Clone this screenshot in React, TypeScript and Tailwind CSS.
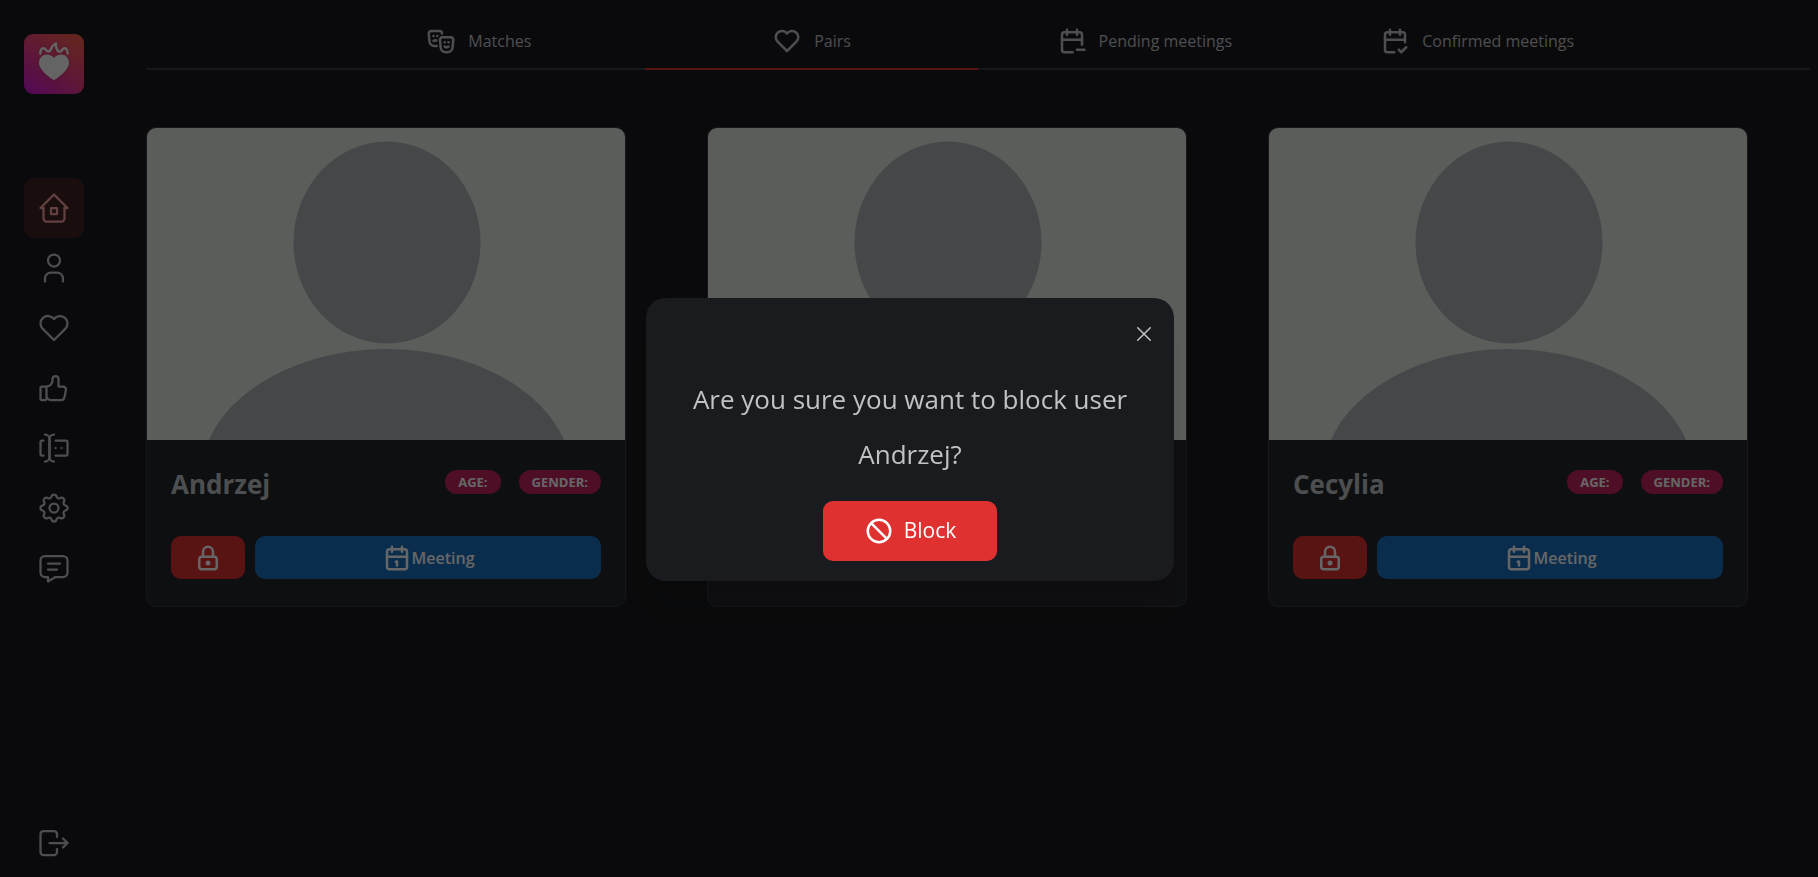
import React from "react";
import {
  TbBan,
  TbCalendar,
  TbCalendarCheck,
  TbCalendarMinus,
  TbForms,
  TbHeart,
  TbHome2,
  TbLock,
  TbLogout,
  TbMasksTheater,
  TbMessage,
  TbSettings,
  TbThumbUp,
  TbUser,
} from "react-icons/tb";
import type { IconType } from "react-icons";

const navItems: { label: string; icon: IconType; active?: boolean }[] = [
  { label: "Home", icon: TbHome2, active: true },
  { label: "Profile", icon: TbUser },
  { label: "Pairs", icon: TbHeart },
  { label: "Likes", icon: TbThumbUp },
  { label: "Forms", icon: TbForms },
  { label: "Settings", icon: TbSettings },
  { label: "Messages", icon: TbMessage },
];

const tabs: { label: string; icon: IconType; active?: boolean }[] = [
  { label: "Matches", icon: TbMasksTheater },
  { label: "Pairs", icon: TbHeart, active: true },
  { label: "Pending meetings", icon: TbCalendarMinus },
  { label: "Confirmed meetings", icon: TbCalendarCheck },
];

const people = ["Andrzej", "Beata", "Cecylia"];

function Logo() {
  return (
    <svg viewBox="0 0 60 60" className="size-[60px]" role="img" aria-label="Logo">
      <defs>
        <linearGradient id="logo-bg" x1="0.15" y1="1" x2="0.85" y2="0">
          <stop offset="0" stopColor="#d01ad0" />
          <stop offset="0.5" stopColor="#ee3f84" />
          <stop offset="1" stopColor="#fa5f4e" />
        </linearGradient>
      </defs>
      <rect width="60" height="60" rx="9" fill="url(#logo-bg)" />
      <g className="drop-shadow-sm">
        <path
          d="M30 46 C28.500 46 15 36.500 15 29 C15 24 18.500 20.500 22.500 20.500 C25.500 20.500 28.500 21.800 30 24 C31.500 21.800 34.500 20.500 37.500 20.500 C41.500 20.500 45 24 45 29 C45 36.500 31.500 46 30 46 Z"
          fill="#fafafa"
        />
        <path
          d="M16.300 19.500 C16.300 14.500 19.500 12.500 22 16 C23.500 18.200 26 17.800 27 15 C28 12 29.500 10.500 32 9.500 C31.500 12 32 14 33.500 16.500 C35 18.500 37 17.800 38.500 15.500 C41 12.500 43.700 15.500 43.700 19.500"
          fill="none"
          stroke="#fafafa"
          strokeWidth="2.400"
          strokeLinecap="round"
          strokeLinejoin="round"
        />
      </g>
    </svg>
  );
}

function Sidebar() {
  return (
    <nav className="flex w-[108px] shrink-0 flex-col items-center pt-[34px] pb-1">
      <Logo />
      <div className="mt-[84px] flex flex-col">
        {navItems.map(({ label, icon: Icon, active }) => (
          <a
            key={label}
            href="#"
            aria-label={label}
            className={
              active
                ? "flex size-[60px] items-center justify-center rounded-[10px] bg-[#3f2224] text-[#faa2a2]"
                : "flex size-[60px] items-center justify-center rounded-[10px] text-[#c1c2c5]"
            }
          >
            <Icon size={36} style={{ strokeWidth: 1.5 }} />
          </a>
        ))}
      </div>
      <a href="#" aria-label="Log out" className="mt-auto flex size-[60px] items-center justify-center text-[#c1c2c5]">
        <TbLogout size={36} style={{ strokeWidth: 1.5 }} />
      </a>
    </nav>
  );
}

function Tabs() {
  return (
    <div role="tablist" className="flex justify-center border-b-2 border-[#373a40]">
      {tabs.map(({ label, icon: Icon, active }) => (
        <button
          key={label}
          role="tab"
          aria-selected={!!active}
          className={
            active
              ? "-mb-[2px] flex w-1/5 items-center justify-center gap-3 border-b-2 border-[#e03131] pt-4 pb-3 text-base leading-7"
              : "-mb-[2px] flex w-1/5 items-center justify-center gap-3 border-b-2 border-transparent pt-4 pb-3 text-base leading-7"
          }
        >
          <Icon size={30} />
          {label}
        </button>
      ))}
    </div>
  );
}

function Avatar() {
  return (
    <svg viewBox="0 0 478 312" preserveAspectRatio="none" className="block h-[312px] w-full bg-[#e4e8e4]" aria-hidden="true">
      <ellipse cx="240" cy="114.500" rx="93.500" ry="101" fill="#b0b2b4" />
      <ellipse cx="239.500" cy="350" rx="186" ry="129" fill="#b0b2b4" />
    </svg>
  );
}

function Card({ name }: { name: string }) {
  return (
    <article className="overflow-hidden rounded-[10px] border border-[#373a40] bg-[#25262b]">
      <Avatar />
      <div className="px-6 pt-6 pb-[27px]">
        <div className="flex items-start justify-between">
          <h2 className="text-[26px] leading-10 font-bold">{name}</h2>
          <div className="mt-1.5 flex gap-[18px] text-[13px] leading-6 font-bold text-white">
            <span className="rounded-full bg-[#c2255c] px-[13px]">AGE:</span>
            <span className="rounded-full bg-[#c2255c] px-[13px]">GENDER:</span>
          </div>
        </div>
        <div className="mt-8 flex gap-[10px] text-white">
          <button aria-label={`Block ${name}`} className="flex h-[43px] w-[74px] items-center justify-center rounded-[10px] bg-[#e03131]">
            <TbLock size={30} />
          </button>
          <button className="flex h-[43px] flex-1 items-center justify-center rounded-[10px] bg-[#1971c2] text-base font-semibold">
            <TbCalendar size={30} />
            Meeting
          </button>
        </div>
      </div>
    </article>
  );
}

function BlockDialog() {
  return (
    <div className="fixed inset-0 flex items-center justify-center bg-black/60 pt-0.5 pl-0.5">
      <section
        role="dialog"
        aria-modal="true"
        aria-labelledby="block-title"
        className="flex w-[528px] flex-col rounded-[20px] bg-[#1a1b1e] p-5 shadow-[0_1px_3px_rgba(0,0,0,0.05),0_36px_28px_-7px_rgba(0,0,0,0.1),0_17px_17px_-7px_rgba(0,0,0,0.1)]"
      >
        <button aria-label="Close" className="-mr-1.5 flex size-8 items-center justify-center self-end">
          <svg viewBox="0 0 14 14" className="size-[14px]" aria-hidden="true">
            <path d="M0.700 0.700 L13.300 13.300 M13.300 0.700 L0.700 13.300" stroke="currentColor" strokeWidth="1.500" strokeLinecap="round" />
          </svg>
        </button>
        <h1 id="block-title" className="mt-[22px] text-center text-[26px] leading-[55px]">
          Are you sure you want to block user Andrzej?
        </h1>
        <button className="mt-[19px] flex h-[60px] w-[174px] items-center justify-center gap-[10px] self-center rounded-[10px] bg-[#e03131] text-[21px] font-medium text-white">
          <TbBan size={30} />
          Block
        </button>
      </section>
    </div>
  );
}

export default function App() {
  return (
    <div className="flex min-h-screen bg-[#1a1b1e] font-['Open_Sans','Noto_Sans',sans-serif] text-[#c1c2c5]">
      <Sidebar />
      <main className="flex-1 pt-[10px] pr-2 pl-[38px]">
        <Tabs />
        <div className="mt-[57px] mr-[62px] grid grid-cols-3 gap-[81px]">
          {people.map((name) => (
            <Card key={name} name={name} />
          ))}
        </div>
      </main>
      <BlockDialog />
    </div>
  );
}
